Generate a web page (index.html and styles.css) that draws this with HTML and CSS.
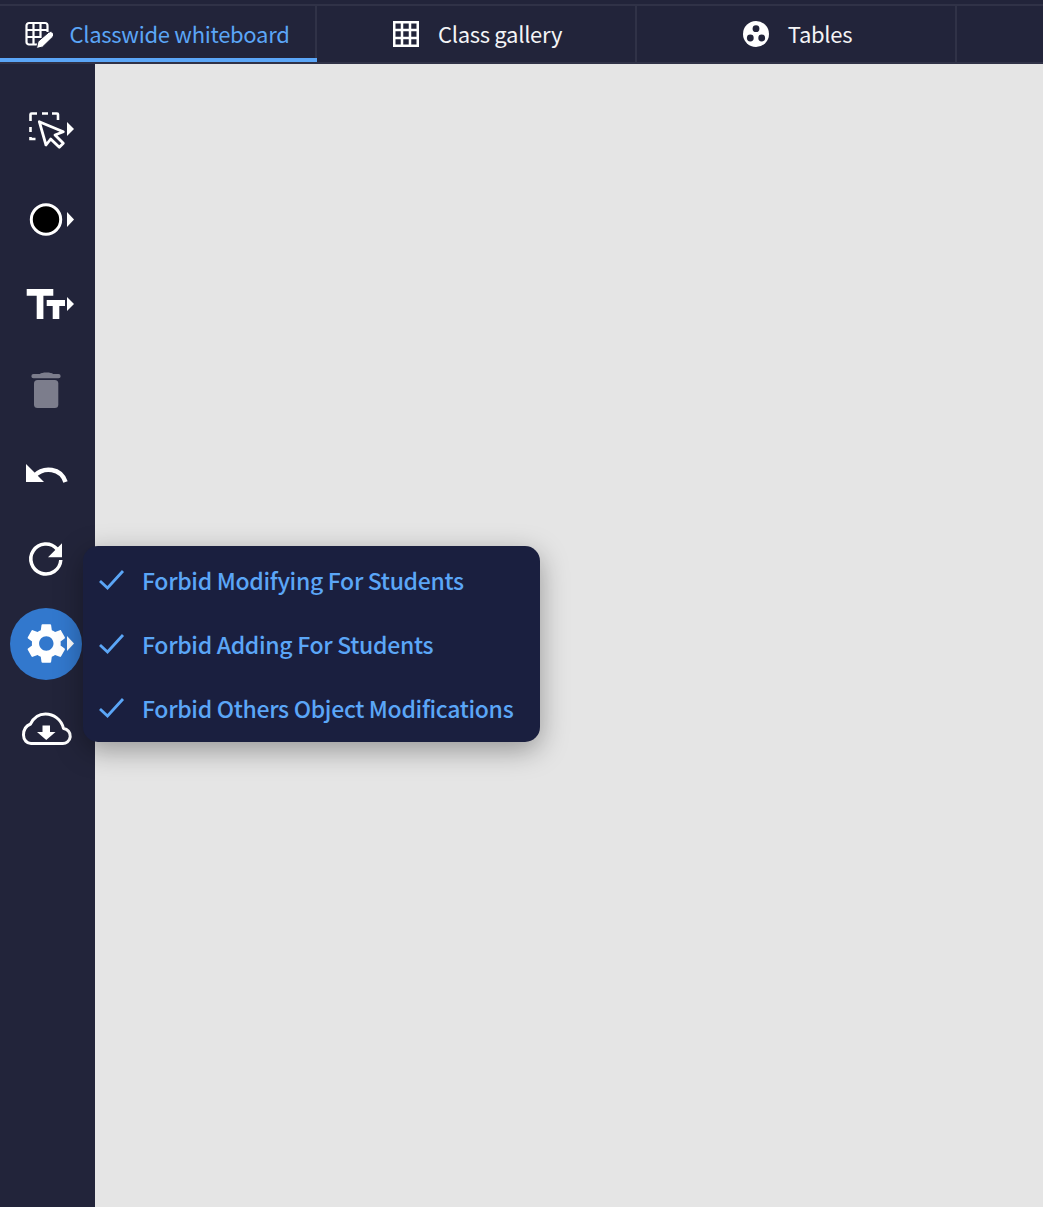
FILE: index.html
```html
<!DOCTYPE html>
<html lang="en">
<head>
<meta charset="utf-8">
<title>Classwide whiteboard</title>
<link rel="stylesheet" href="styles.css">
</head>
<body>
<div class="app">
  <nav class="tabs">
    <div class="tab tab-active">
      <svg class="tab-icon" width="28" height="28" viewBox="0 0 28 28"><g fill="none" stroke="#fff" stroke-width="2.200"><path d="M13 24.500H4A2.500 2.500 0 0 1 1.500 22V5.500A2.500 2.500 0 0 1 4 3h16a2.500 2.500 0 0 1 2.500 2.500V12"/><path d="M1.500 10h21M1.500 17h14M8.500 3v21M15.500 3v15"/></g><path d="M11.500 28.500l1.500-7 10.500-9a3 3 0 0 1 4.300 4.500L17.500 27z" fill="#fff" stroke="#22243a" stroke-width="1"/></svg>
      <span class="tab-label">Classwide whiteboard</span>
    </div>
    <div class="tab tab-wide">
      <svg class="tab-icon" width="26" height="26" viewBox="0 0 26 26"><path d="M1.250 1.250h23.500v23.500H1.250zM9 1.250v23.500M17 1.250v23.500M1.250 9h23.500M1.250 17h23.500" fill="none" stroke="#fff" stroke-width="2.500"/></svg>
      <span class="tab-label">Class gallery</span>
    </div>
    <div class="tab tab-wide">
      <svg class="tab-icon" width="26" height="26" viewBox="0 0 26 26"><circle cx="13" cy="13" r="13" fill="#fff"/><circle cx="13" cy="7.700" r="3.400" fill="#22243a"/><circle cx="7.300" cy="17" r="3.400" fill="#22243a"/><circle cx="18.700" cy="17" r="3.400" fill="#22243a"/></svg>
      <span class="tab-label">Tables</span>
    </div>
    <div class="tab tab-rest"></div>
  </nav>
  <div class="main">
    <aside class="toolbar">
      <div class="tool">
        <svg width="72" height="72" viewBox="10 94 72 72"><path d="M30.500 121v-6.500a1 1 0 0 1 1-1H37M42 113.500h6M52 113.500h5a1 1 0 0 1 1 1V120M30.500 127v5M30.500 137v2h5" fill="none" stroke="#fff" stroke-width="2.600"/><path d="M39.300 121.700l24 10-8.300 3.300 8.300 8.300-4 4-8.600-8.300-4.700 6z" fill="#22243a" stroke="#fff" stroke-width="2.800" stroke-linejoin="round"/><path d="M67 122l7 7-7 7z" fill="#fff"/></svg>
      </div>
      <div class="tool">
        <svg width="72" height="72" viewBox="10 180 72 72"><circle cx="46" cy="219.500" r="14.700" fill="#000" stroke="#fff" stroke-width="3"/><path d="M67 212l7 7.500-7 7.500z" fill="#fff"/></svg>
      </div>
      <div class="tool">
        <svg width="72" height="72" viewBox="10 266 72 72"><path d="M26.700 289h26.600v6.700H43.400V319h-6.700V295.700h-10zM46.700 300H65v6h-5.700v13h-6.600v-13h-6z" fill="#fff"/><path d="M67 297l7 7-7 7z" fill="#fff"/></svg>
      </div>
      <div class="tool">
        <svg width="72" height="72" viewBox="10 352 72 72"><g fill="#7c7d8c"><path d="M40 374c1-2 12-2 13 0h5.500a2 2 0 0 1 0 4.300h-25a2 2 0 0 1 0-4.300z"/><rect x="34" y="380" width="24.300" height="28" rx="3.500"/></g></svg>
      </div>
      <div class="tool">
        <svg width="72" height="72" viewBox="10 438 72 72"><path d="M26 464v18h18z" fill="#fff"/><path d="M34 476c10-10 27-8 31.500 6" fill="none" stroke="#fff" stroke-width="4.500"/></svg>
      </div>
      <div class="tool">
        <svg width="72" height="72" viewBox="10 524 72 72"><path d="M57 549A15 15 0 1 0 60.800 560" fill="none" stroke="#fff" stroke-width="3.500"/><path d="M62 543.300v14H48z" fill="#fff"/></svg>
      </div>
      <div class="tool tool-active">
        <svg width="72" height="72" viewBox="10 608 72 72"><path transform="translate(22.300 619.500) scale(2)" d="M19.140 12.940c.04-.3.06-.61.06-.94 0-.32-.02-.64-.07-.94l2.030-1.580c.18-.14.23-.41.12-.61l-1.920-3.320c-.12-.22-.37-.29-.59-.22l-2.390.96c-.5-.38-1.030-.7-1.620-.94l-.36-2.540c-.04-.24-.24-.41-.48-.41h-3.840c-.24 0-.43.17-.47.41l-.36 2.540c-.59.24-1.130.57-1.620.94l-2.390-.96c-.22-.08-.47 0-.59.22L2.740 8.870c-.12.21-.08.47.12.61l2.030 1.580c-.05.3-.09.63-.09.94s.02.64.07.94l-2.030 1.580c-.18.14-.23.41-.12.61l1.920 3.320c.12.22.37.29.59.22l2.390-.96c.5.38 1.030.7 1.620.94l.36 2.540c.05.24.24.41.48.41h3.840c.24 0 .44-.17.47-.41l.36-2.540c.59-.24 1.130-.56 1.620-.94l2.390.96c.22.08.47 0 .59-.22l1.920-3.320c.12-.22.07-.47-.12-.61l-2.010-1.580zM12 15.600c-1.980 0-3.600-1.620-3.600-3.600s1.620-3.600 3.600-3.600 3.600 1.620 3.600 3.600-1.620 3.600-3.600 3.600z" fill="#fff"/><path d="M67 636l7 7.500-7 7.500z" fill="#fff"/></svg>
      </div>
      <div class="tool">
        <svg width="72" height="72" viewBox="10 696 72 72"><path d="M31 743.500h31a7.500 7.500 0 0 0 1.500-15c-2-9-10-14.500-18-14.500-7 0-12 4-15 10-5 2-7 6-7 11 0 5 3.500 8.500 7.500 8.500z" fill="none" stroke="#fff" stroke-width="3" stroke-linejoin="round"/><path d="M42.500 725.500h7.500v6.500h5.500l-9.250 8-9.250-8h5.500z" fill="#fff"/></svg>
      </div>
    </aside>
    <section class="canvas"></section>
    <ul class="menu">
      <li class="menu-item"><svg width="26" height="22" viewBox="0 0 26 22"><path d="M1 12l7.500 7L24 2" fill="none" stroke="#5ba6f7" stroke-width="2.800"/></svg><span>Forbid Modifying For Students</span></li>
      <li class="menu-item"><svg width="26" height="22" viewBox="0 0 26 22"><path d="M1 12l7.500 7L24 2" fill="none" stroke="#5ba6f7" stroke-width="2.800"/></svg><span>Forbid Adding For Students</span></li>
      <li class="menu-item"><svg width="26" height="22" viewBox="0 0 26 22"><path d="M1 12l7.500 7L24 2" fill="none" stroke="#5ba6f7" stroke-width="2.800"/></svg><span>Forbid Others Object Modifications</span></li>
    </ul>
  </div>
</div>
</body>
</html>
```
FILE: styles.css
```css
* { box-sizing: border-box; }
html, body { margin: 0; height: 100%; }
body { font-family: "Noto Sans CJK JP", "Noto Sans", sans-serif; background: #e5e5e5; overflow: hidden; }
.app { display: flex; flex-direction: column; height: 1207px; }
.tabs {
  display: flex;
  height: 64px;
  flex: none;
  background: #22243a;
  box-shadow: inset 0 4px 0 #22243a, inset 0 6px 0 #303247;
  border-bottom: 2px solid #303247;
}
.tab {
  width: 320px;
  margin-top: 6px;
  display: flex;
  align-items: center;
  justify-content: center;
  gap: 19px;
  color: #f4f4f6;
  font-size: 22px;
  letter-spacing: -0.29px;
  border-right: 2px solid #303247;
}
.tab-label { margin-bottom: 2px; }
.tab-active {
  width: 317px;
  position: relative;
  color: #5ba6f7;
  gap: 16px;
}
.tab-active::after {
  content: "";
  position: absolute;
  left: 0;
  right: -2px;
  bottom: 0;
  height: 4px;
  background: #5ba6f7;
}
.tab-wide { padding-left: 3px; }
.tab-rest { flex: 1; border-right: 0; }
.tab-icon { flex: none; }
.main { flex: 1; display: flex; position: relative; min-height: 0; }
.toolbar {
  width: 95px;
  flex: none;
  background: #22243a;
  padding: 30px 0 0 10px;
  display: flex;
  flex-direction: column;
  gap: 14px;
}
.tool { width: 72px; height: 72px; flex: none; }
.tool svg { display: block; }
.tool-active { background: #3278cd; border-radius: 50%; margin-top: -2px; margin-bottom: 2px; }
.canvas { flex: 1; background: #e5e5e5; }
.menu {
  position: absolute;
  left: 83px;
  top: 482px;
  width: 457px;
  height: 196px;
  margin: 0;
  padding: 2px 0;
  list-style: none;
  background: #1a1f3f;
  border-radius: 15px;
  box-shadow: 0 8px 28px rgba(0, 0, 0, 0.35);
}
.menu-item {
  height: 64px;
  display: flex;
  align-items: center;
  gap: 17px;
  padding-left: 16px;
  color: #5ba6f7;
  font-size: 23px;
  font-weight: 500;
  letter-spacing: -0.32px;
  white-space: nowrap;
}
```
